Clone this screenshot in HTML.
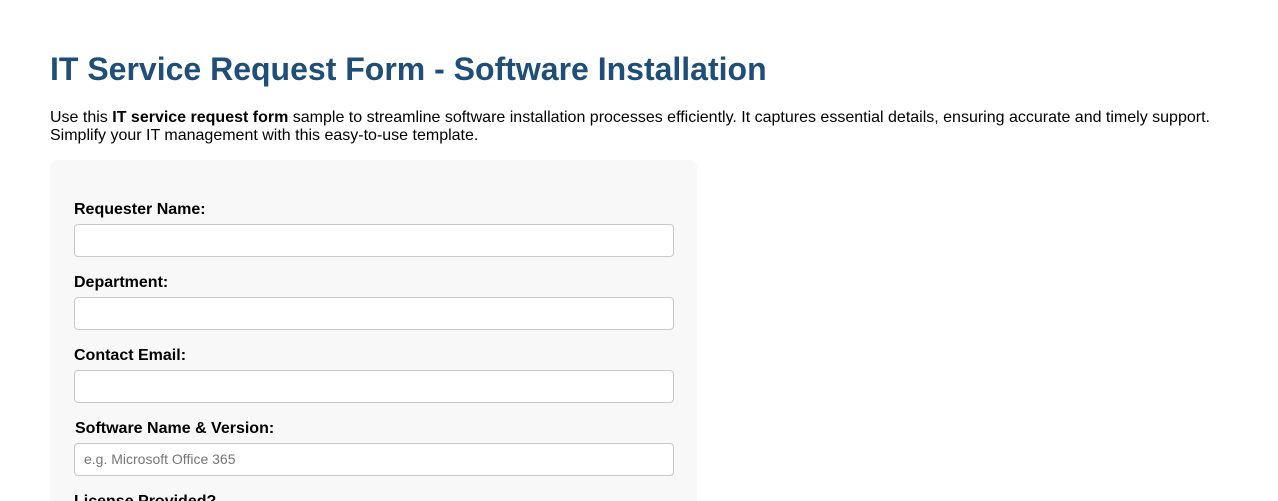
<!DOCTYPE html>
<html><head><style>
html,body{margin:0;background:#fff;font-family:"Liberation Sans",Arial,sans-serif;color:#000;width:1278px;height:501px;overflow:hidden;}
.wrap{position:relative;width:1278px;height:501px;overflow:hidden;}
h1{position:absolute;left:50px;top:50px;margin:0;font-size:32px;line-height:38px;color:#1f4e79;font-weight:bold;}
p{position:absolute;left:50px;top:109px;margin:0;font-size:16px;line-height:18px;width:1180px;}
.card{position:absolute;left:50px;top:160px;width:647px;height:341px;background:#f8f8f8;border-radius:8px 8px 0 0;}
label{position:absolute;left:74px;font-size:16px;font-weight:bold;line-height:18px;}
.in{position:absolute;left:74px;width:598px;height:31px;background:#fff;border:1px solid #c8c8d0;border-radius:4px;box-sizing:content-box;font-size:14px;color:#757575;line-height:31px;text-indent:9px;}
</style></head><body><div class="wrap">
<h1>IT Service Request Form - Software Installation</h1>
<p>Use this <b>IT service request form</b> sample to streamline software installation processes efficiently. It captures essential details, ensuring accurate and timely support. Simplify your IT management with this easy-to-use template.</p>
<div class="card"></div>
<label style="top:201px">Requester Name:</label>
<div class="in" style="top:224px"></div>
<label style="top:274px">Department:</label>
<div class="in" style="top:297px"></div>
<label style="top:347px">Contact Email:</label>
<div class="in" style="top:370px"></div>
<label style="top:420px;left:75px">Software Name &amp; Version:</label>
<div class="in" style="top:443px">e.g. Microsoft Office 365</div>
<label style="top:493px">License Provided?</label>
</div></body></html>
